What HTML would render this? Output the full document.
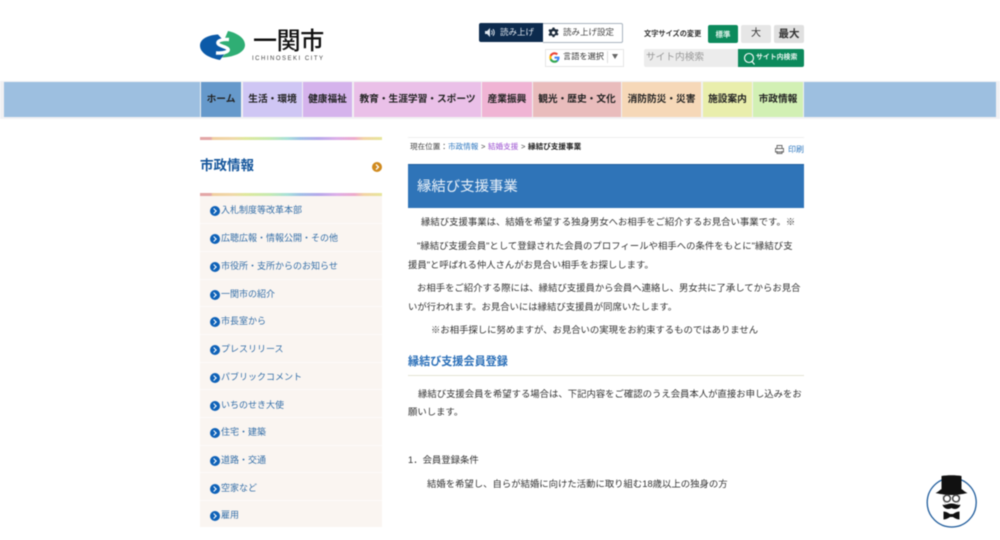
<!DOCTYPE html>
<html lang="ja"><head><meta charset="utf-8"><title>緑結び支援事業</title>
<style>
html,body{margin:0;padding:0;background:#fff}
body{width:1000px;height:540px;overflow:hidden;position:relative;font-family:"Liberation Sans","Noto Sans CJK JP",sans-serif;color:#333;filter:blur(.45px)}
.a{position:absolute;white-space:nowrap}
.n{position:absolute;top:82px;height:35px;line-height:35px;text-align:center;font-size:9.7px;font-weight:700;color:#222;white-space:nowrap}
.rb{height:4px;background:linear-gradient(90deg,#e3a6a6 0,#e3a6a6 6%,#f0cfa0 7%,#f0d8a8 18%,#dfe89c 25%,#c6eab0 38%,#a8e0d8 48%,#a0c0e6 55%,#b5a8ea 65%,#dcaee8 75%,#eeaacb 85%,#f3d4a4 90%,#e6e69a 100%)}
.s{position:absolute;left:200px;width:182px;height:27.7px;border-bottom:1px solid #fdfbf9;box-sizing:border-box}
.s i{position:absolute;left:9.5px;top:10px;width:10px;height:10px;border-radius:50%;background:#0f62b8}
.s i:after{content:"";position:absolute;left:2px;top:3px;width:3px;height:3px;border:solid #fff;border-width:1.2px 1.2px 0 0;transform:rotate(45deg)}
.s span{position:absolute;left:21px;top:6px;font-size:9px;line-height:16px;color:#356fa8;white-space:nowrap}
.p{position:absolute;font-size:9.37px;line-height:14px;color:#333;white-space:nowrap}
</style></head><body>

<!-- logo -->
<svg class="a" style="left:199px;top:30px" width="48" height="32" viewBox="0 0 48 32">
<path d="M19 4.500C9 5 1 9 1 15.500C1 23 10 28 21 30L27 22L29 18L24 10Z" fill="#0c5aa8"/>
<path d="M29 1C38 3 46 8 46 15C46 22 36 27 23 27.500L28 21.500C31 18 27 16 24 15C20 14 20 11 25 10.500Z" fill="#2fae74"/>
<path d="M30 9.500C24 9 18 10.500 19 13.500C20 16 27 16.500 29 19C30.500 21.500 25 23.500 17 23" fill="none" stroke="#fff" stroke-width="3.400"/>
</svg>
<div class="a" style="left:253px;top:27px;font-size:24px;line-height:30px;font-weight:500;color:#111;letter-spacing:-.4px">一関市</div>
<div class="a" style="left:252px;top:55px;font-size:6px;line-height:8px;color:#444;letter-spacing:1.5px">ICHINOSEKI CITY</div>

<!-- read aloud -->
<div class="a" style="left:479px;top:23px;width:64px;height:19px;background:#0d2b4e;border-radius:2px 0 0 2px;color:#dfe6ee;font-size:8.5px;line-height:18px;text-indent:21px">読み上げ</div>
<svg class="a" style="left:485px;top:28px" width="10" height="9" viewBox="0 0 10 9"><path d="M0 3h2l3-3v9L2 6H0z" fill="#dfe6ee"/><path d="M6.500 2.500a3 3 0 0 1 0 4M8 1.200a5 5 0 0 1 0 6.600" stroke="#dfe6ee" fill="none"/></svg>
<div class="a" style="left:543px;top:23px;width:79px;height:18px;border:1px solid #a9b4bf;border-left:0;border-radius:0 2px 2px 0;color:#444;font-size:8.5px;line-height:17px;text-indent:20px;background:#fff">読み上げ設定</div>
<svg class="a" style="left:548px;top:27px" width="11" height="11" viewBox="0 0 24 24"><path d="M10 1h4l1 3 3 1.500 3-1 2 3.500-2.500 2v3l2.500 2-2 3.500-3-1-3 1.500-1 3h-4l-1-3L6 18.500l-3 1-2-3.500L3.500 14v-3L1 8l2-3.500 3 1L9 4z" fill="#1f2d3d"/><circle cx="12" cy="12.500" r="3.500" fill="#fff"/></svg>

<div class="a" style="left:545px;top:49px;width:77px;height:16px;border:1px solid #e6e6e6;background:#fff"></div>
<svg class="a" style="left:549px;top:52px" width="11" height="11" viewBox="0 0 24 24"><path d="M23 12.300c0-.8-.1-1.600-.2-2.300H12v4.400h6.200c-.3 1.400-1.100 2.600-2.300 3.400v2.800h3.700c2.100-2 3.400-4.900 3.400-8.300z" fill="#4285f4"/><path d="M12 23.500c3.100 0 5.700-1 7.600-2.800l-3.700-2.900c-1 .7-2.300 1.100-3.900 1.100-3 0-5.500-2-6.400-4.700H1.800v2.900c1.900 3.800 5.800 6.400 10.200 6.400z" fill="#34a853"/><path d="M5.600 14.200c-.5-1.400-.5-3 0-4.400V6.900H1.800c-1.600 3.200-1.600 7 0 10.200z" fill="#fbbc05"/><path d="M12 5.100c1.700 0 3.200.6 4.400 1.700l3.300-3.300C17.700 1.600 15.100.5 12 .5 7.600.5 3.700 3.100 1.800 6.900l3.800 2.900C6.500 7.100 9 5.100 12 5.100z" fill="#ea4335"/></svg>
<div class="a" style="left:563px;top:50px;font-size:8.2px;line-height:14px;color:#333">言語を選択</div>
<div class="a" style="left:607px;top:51px;width:1px;height:12px;background:#ddd"></div>
<div class="a" style="left:612px;top:54px;width:0;height:0;border:3px solid transparent;border-top:5px solid #666;border-bottom:0"></div>

<!-- text size -->
<div class="a" style="left:644px;top:27px;font-size:7.2px;line-height:14px;font-weight:700;color:#333">文字サイズの変更</div>
<div class="a" style="left:708px;top:25px;width:30px;height:18px;background:#0c8a5c;border-radius:2px;color:#dff3ea;font-size:7.5px;line-height:19px;text-align:center;font-weight:700">標準</div>
<div class="a" style="left:741px;top:25px;width:30px;height:18px;background:#e6e6e6;border-radius:2px;color:#333;font-size:10px;line-height:18px;text-align:center">大</div>
<div class="a" style="left:774px;top:25px;width:30px;height:18px;background:#e0e0e0;border-radius:2px;color:#333;font-size:10.5px;line-height:18px;text-align:center;font-weight:700">最大</div>
<div class="a" style="left:644px;top:49px;width:94px;height:18px;background:#ececec;border-radius:2px 0 0 2px;color:#999;font-size:9.7px;line-height:17px;text-indent:2px">サイト内検索</div>
<div class="a" style="left:738px;top:49px;width:66px;height:18px;background:#0c8a5c;border-radius:0 2px 2px 0;color:#e8f6f0;font-size:6.9px;line-height:18px;text-indent:18px;font-weight:700">サイト内検索</div>
<svg class="a" style="left:743px;top:52px" width="13" height="13" viewBox="0 0 13 13"><circle cx="6" cy="6" r="4.500" fill="none" stroke="#fff" stroke-width="1.100"/><path d="M9 9.500l2.500 3" stroke="#fff" stroke-width="1.100"/></svg>

<!-- nav -->
<div class="a" style="left:0;top:81px;width:1000px;height:38px;background:#f1f1f3"></div>
<div class="a" style="left:4px;top:82px;width:196px;height:35px;background:#9dbfe0"></div>
<div class="a" style="left:804px;top:82px;width:192px;height:35px;background:#9dbfe0"></div>
<div class="n" style="left:201px;width:40px;background:#6699cb">ホーム</div>
<div class="n" style="left:243px;width:59px;background:#cfc6f4">生活・環境</div>
<div class="n" style="left:303px;width:49px;background:#d5b3ec">健康福祉</div>
<div class="n" style="left:354px;width:127px;background:#eac0e8">教育・生涯学習・スポーツ</div>
<div class="n" style="left:482px;width:50px;background:#f0b4d4">産業振興</div>
<div class="n" style="left:533px;width:88px;background:#e9bcbc">観光・歴史・文化</div>
<div class="n" style="left:622px;width:79px;background:#f6d8b8">消防防災・災害</div>
<div class="n" style="left:703px;width:49px;background:#e9eeac">施設案内</div>
<div class="n" style="left:753px;width:50px;background:#d2f0b4">市政情報</div>

<!-- sidebar -->
<div class="a rb" style="left:200px;top:137px;width:182px;height:3px"></div>
<div class="a" style="left:200px;top:156px;font-size:13.5px;line-height:20px;font-weight:700;color:#15569c">市政情報</div>
<div class="a" style="left:372px;top:162px;width:10px;height:10px;border-radius:50%;background:#d08a1e"></div>
<svg class="a" style="left:372px;top:162px" width="10" height="10"><path d="M4 2.500L6.500 5 4 7.500" stroke="#fff" stroke-width="1.300" fill="none"/></svg>
<div class="a rb" style="left:200px;top:193px;width:182px;height:3px"></div>
<div class="a" style="left:200px;top:196px;width:182px;height:331px;background:#faf5f1"></div>
<div class="s" style="top:196px"><i></i><span>入札制度等改革本部</span></div>
<div class="s" style="top:224px"><i></i><span>広聴広報・情報公開・その他</span></div>
<div class="s" style="top:252px"><i></i><span>市役所・支所からのお知らせ</span></div>
<div class="s" style="top:279.500px"><i></i><span>一関市の紹介</span></div>
<div class="s" style="top:307px"><i></i><span>市長室から</span></div>
<div class="s" style="top:335px"><i></i><span>プレスリリース</span></div>
<div class="s" style="top:362.500px"><i></i><span>パブリックコメント</span></div>
<div class="s" style="top:390.500px"><i></i><span>いちのせき大使</span></div>
<div class="s" style="top:418px"><i></i><span>住宅・建築</span></div>
<div class="s" style="top:445.500px"><i></i><span>道路・交通</span></div>
<div class="s" style="top:473.500px"><i></i><span>空家など</span></div>
<div class="s" style="top:501px;border:0"><i></i><span>雇用</span></div>

<!-- breadcrumb -->
<div class="a" style="left:408px;top:137px;width:396px;height:1px;background:#eee"></div>
<div class="a" style="left:410px;top:140px;font-size:7.6px;line-height:14px;color:#444;word-spacing:.5px">現在位置：<span style="color:#2f78c0">市政情報</span> &gt; <span style="color:#9b50d0">結婚支援</span> &gt; <b style="color:#222">縁結び支援事業</b></div>
<svg class="a" style="left:775px;top:145px" width="9" height="9" viewBox="0 0 9 9"><path d="M2 3V.5h5V3M.5 3.500h8v3.500h-8zM2 6v2.500h5V6" fill="none" stroke="#666" stroke-width=".9"/></svg>
<div class="a" style="left:788px;top:143px;font-size:8px;line-height:14px;color:#2f78c0">印刷</div>

<!-- title -->
<div class="a" style="left:408px;top:164px;width:396px;height:44px;background:#2f74b8;border-top:1px solid #1f5f9f;box-sizing:border-box;color:#e8f0f8;font-size:14.4px;line-height:45px;text-indent:9px">縁結び支援事業</div>

<!-- body -->
<div class="p" style="left:421px;top:215px;letter-spacing:.02px">縁結び支援事業は、結婚を希望する独身男女へお相手をご紹介するお見合い事業です。※</div>
<div class="p" style="left:417px;top:239px;letter-spacing:.03px">&quot;縁結び支援会員&quot;として登録された会員のプロフィールや相手への条件をもとに&quot;縁結び支</div>
<div class="p" style="left:408px;top:258px">援員&quot;と呼ばれる仲人さんがお見合い相手をお探しします。</div>
<div class="p" style="left:417px;top:281px">お相手をご紹介する際には、縁結び支援員から会員へ連絡し、男女共に了承してからお見合</div>
<div class="p" style="left:408px;top:300px">いが行われます。お見合いには縁結び支援員が同席いたします。</div>
<div class="p" style="left:431px;top:323px">※お相手探しに努めますが、お見合いの実現をお約束するものではありません</div>

<div class="a" style="left:408px;top:353.500px;font-size:11.1px;line-height:16px;font-weight:700;color:#2a6fb8">縁結び支援会員登録</div>
<div class="a" style="left:408px;top:374.500px;width:396px;height:1.500px;background:#e4e4d4"></div>

<div class="p" style="left:418px;top:387px">縁結び支援会員を希望する場合は、下記内容をご確認のうえ会員本人が直接お申し込みをお</div>
<div class="p" style="left:408px;top:405px">願いします。</div>
<div class="p" style="left:408px;top:453px">1．会員登録条件</div>
<div class="p" style="left:427px;top:477px">結婚を希望し、自らが結婚に向けた活動に取り組む18歳以上の独身の方</div>

<!-- mascot -->
<svg class="a" style="left:925px;top:475px" width="54" height="54" viewBox="0 0 54 54">
<circle cx="26.700" cy="28" r="24.700" fill="#000" opacity=".12"/>
<circle cx="26.700" cy="27.500" r="24.500" fill="#fff" stroke="#1f5c9c" stroke-width="1.300"/>
<path d="M16.500 1C22 0 31 0 36.500 1V14H16.500z" fill="#111"/>
<path d="M10.500 18C14 16.500 15.500 14 17 14H36C37.500 14 39 16.500 42.500 18C36 19.500 31 20 26.500 20S17 19.500 10.500 18z" fill="#111"/>
<path d="M18 20c0 7 3 12 8.500 12s8.500-5 8.500-12" fill="none" stroke="#ccc" stroke-width=".8"/>
<circle cx="22" cy="23.500" r="3.400" fill="#fff" stroke="#444" stroke-width="1.500"/>
<circle cx="31" cy="23.500" r="3.400" fill="#fff" stroke="#444" stroke-width="1.500"/>
<path d="M17.500 29.500c2.500 1.500 5.500-1.500 9-1 3.500-.5 6.500 2.500 9 1-1 4.500-6 5.500-9 3.500-3 2-8 1-9-3.500z" fill="#111"/>
<path d="M18.500 36.500c2.500 0 5 1.500 6.500 2.500h3c1.500-1 4-2.500 6.500-2.500v8c-2.500 0-5-1.500-6.500-2.500h-3c-1.500 1-4 2.500-6.500 2.500z" fill="#111"/>
</svg>
</body></html>
